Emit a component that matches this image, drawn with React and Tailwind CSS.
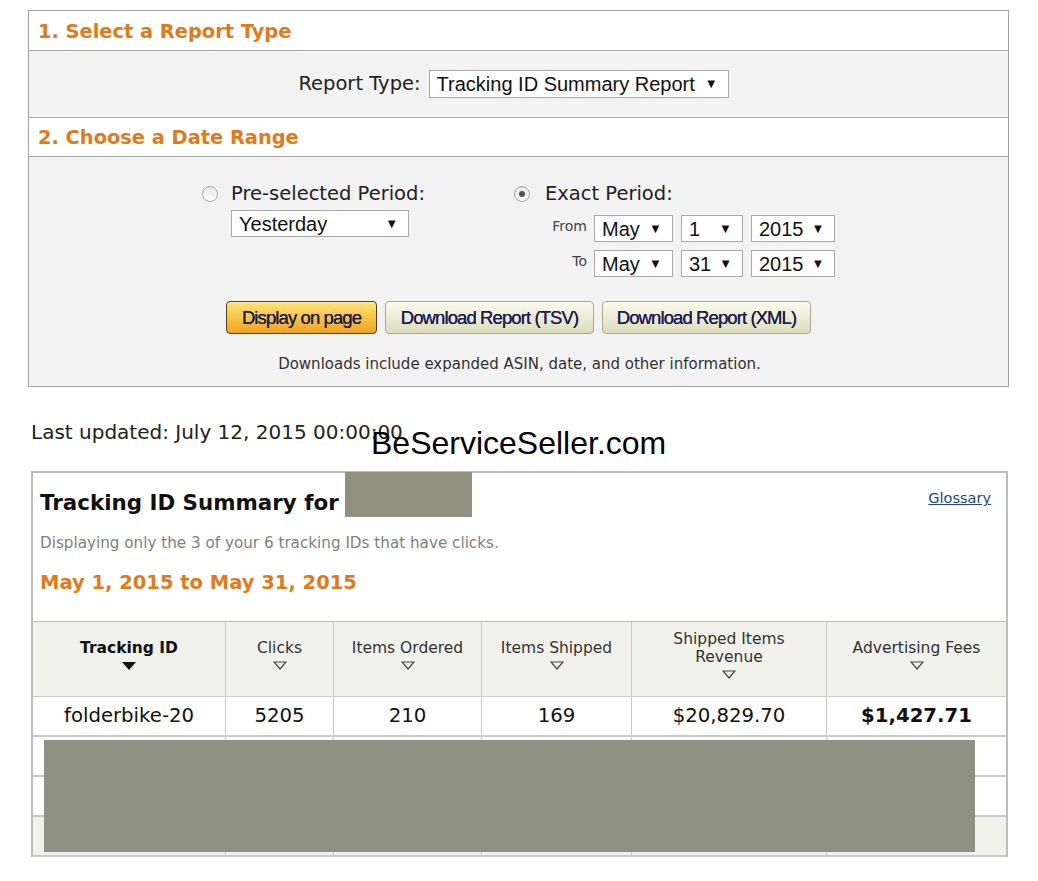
import React from "react";

const verdana = "font-['DejaVu_Sans',Verdana,sans-serif]";
const arial = "font-['Liberation_Sans',Arial,sans-serif]";

function FakeSelect({ value, className }) {
  return (
    <div
      className={`flex items-center justify-between bg-white border border-[#a9a9a9] pl-[7px] pr-[10px] text-[20px] text-[#111] ${arial} ${className}`}
    >
      <span>{value}</span>
      <span className="text-[13px] ml-2">▼</span>
    </div>
  );
}

function Radio({ checked }) {
  return (
    <div className="w-[16px] h-[16px] rounded-full border border-[#a6a6a6] bg-gradient-to-b from-[#e6e6e6] to-[#fbfbfb] flex items-center justify-center">
      {checked && <div className="w-[6px] h-[6px] rounded-full bg-[#555]" />}
    </div>
  );
}

function SortArrow({ filled }) {
  if (filled) {
    return (
      <svg width="16" height="10" viewBox="0 0 16 10">
        <polygon points="1,1 15,1 8,9" fill="#111" />
      </svg>
    );
  }
  return (
    <svg width="14" height="9" viewBox="0 0 14 9">
      <polygon points="1,1 13,1 7,8" fill="none" stroke="#444" strokeWidth="1.2" />
    </svg>
  );
}

const cols = [
  { label: "Tracking ID", w: "w-[192px]", bold: true },
  { label: "Clicks", w: "w-[108px]" },
  { label: "Items Ordered", w: "w-[148px]" },
  { label: "Items Shipped", w: "w-[150px]" },
  { label: "Shipped Items Revenue", w: "w-[195px]", two: true },
  { label: "Advertising Fees", w: "flex-1" },
];

const row1 = ["folderbike-20", "5205", "210", "169", "$20,829.70", "$1,427.71"];

const btnText = "text-[#1b1b55] text-[18.5px] tracking-[-0.9px] [text-shadow:0_0_0.5px_#1b1b55]";

export default function App() {
  return (
    <div className={`relative w-[1038px] h-[881px] bg-white ${verdana}`}>
      <div className="pt-[10px] pl-[28px]">
        {/* report form */}
        <div className="w-[981px] border border-[#a4a4a4]">
          <div className="h-[40px] flex items-center pl-[9px] border-b border-[#a8a8a8] bg-white">
            <h2 className="text-[19.4px] font-bold text-[#e07b1c] pt-[3px]">1. Select a Report Type</h2>
          </div>
          <div className="h-[66px] bg-[#f2f2f2] flex items-center justify-center pr-[10px]">
            <span className="text-[19.5px] text-[#222] mr-[8px]">Report Type:</span>
            <FakeSelect value="Tracking ID Summary Report" className="w-[300px] h-[28px]" />
          </div>
          <div className="h-[40px] flex items-center pl-[9px] border-y border-[#a8a8a8] bg-white">
            <h2 className="text-[19.4px] font-bold text-[#e07b1c] pt-[2px]">2. Choose a Date Range</h2>
          </div>
          <div className="h-[229px] bg-[#f2f2f2] pt-[25px]">
            <div className="flex justify-center gap-[89px]">
              <div className="flex flex-col">
                <div className="flex items-center">
                  <Radio />
                  <span className="ml-[13px] text-[19.5px] leading-[24px] text-[#222]">Pre-selected Period:</span>
                </div>
                <FakeSelect value="Yesterday" className="ml-[29px] mt-[4px] w-[178px] h-[27px]" />
              </div>
              <div className="flex flex-col">
                <div className="flex items-center">
                  <Radio checked />
                  <span className="ml-[15px] text-[19.5px] leading-[24px] text-[#222]">Exact Period:</span>
                </div>
                <div className="flex mt-[9px] items-start">
                  <span className="w-[80px] text-right pr-[7px] pt-[1px] text-[14px] text-[#444]">From</span>
                  <div className="flex gap-[8px]">
                    <FakeSelect value="May" className="w-[79px] h-[27px]" />
                    <FakeSelect value="1" className="w-[62px] h-[27px]" />
                    <FakeSelect value="2015" className="w-[84px] h-[27px]" />
                  </div>
                </div>
                <div className="flex mt-[8px] items-start">
                  <span className="w-[80px] text-right pr-[7px] pt-[1px] text-[14px] text-[#444]">To</span>
                  <div className="flex gap-[8px]">
                    <FakeSelect value="May" className="w-[79px] h-[27px]" />
                    <FakeSelect value="31" className="w-[62px] h-[27px]" />
                    <FakeSelect value="2015" className="w-[84px] h-[27px]" />
                  </div>
                </div>
              </div>
            </div>
            <div className={`flex justify-center mt-[24px] gap-[8px] ${arial}`}>
              <button className={`h-[33px] w-[151px] rounded-[4px] border border-[#4a3d24] bg-gradient-to-b from-[#fde27a] via-[#f7c444] to-[#eea320] shadow-[inset_0_1px_0_#fff3b0] ${btnText}`}>
                Display on page
              </button>
              <button className={`h-[33px] w-[209px] rounded-[4px] border border-[#a9a98c] bg-gradient-to-b from-[#fbfbee] to-[#dcdcbc] ${btnText}`}>
                Download Report (TSV)
              </button>
              <button className={`h-[33px] w-[209px] rounded-[4px] border border-[#a9a98c] bg-gradient-to-b from-[#fbfbee] to-[#dcdcbc] ${btnText}`}>
                Download Report (XML)
              </button>
            </div>
            <p className="text-center text-[15px] text-[#333] mt-[19px] pl-[2px]">
              Downloads include expanded ASIN, date, and other information.
            </p>
          </div>
        </div>

        <p className="mt-[33px] ml-[3px] text-[20px] leading-[24px] text-[#222]">Last updated: July 12, 2015 00:00:00</p>

        {/* summary box */}
        <div className="mt-[27px] ml-[3px] w-[977px] border-2 border-[#bdbdbd] border-b-0 relative">
          <div className="flex justify-between items-start">
            <div className="flex items-start pl-[7px]">
              <span className="text-[21.4px] font-bold text-[#111] mt-[14px]">Tracking ID Summary for</span>
              <div className="ml-[6px] w-[127px] h-[45px] -mt-[1px] bg-[#8f9080]" />
            </div>
            <a href="#" className="text-[14.5px] text-[#23438e] underline mt-[15px] mr-[15px]">Glossary</a>
          </div>
          <p className="pl-[7px] mt-[13px] text-[15.2px] text-[#808080]">
            Displaying only the 3 of your 6 tracking IDs that have clicks.
          </p>
          <p className="pl-[7px] mt-[13px] text-[19.5px] font-bold text-[#e07b1c]">May 1, 2015 to May 31, 2015</p>

          <div className="mt-[24px] border-t border-[#bdbdbd]">
            <div className="flex h-[75px] bg-[#f1f1ec] border-b border-[#c8c8c8]">
              {cols.map((c, i) => (
                <div
                  key={c.label}
                  className={`${c.w} ${i > 0 ? "border-l border-[#c8c8c8]" : ""} flex flex-col items-center ${c.two ? "pt-[8px]" : "pt-[17px]"}`}
                >
                  {c.two ? (
                    <span className="text-[15.5px] text-[#333] text-center leading-[18px]">
                      Shipped Items
                      <br />
                      Revenue
                    </span>
                  ) : (
                    <span className={`text-[15.5px] leading-[18px] ${c.bold ? "font-bold text-[#111]" : "text-[#333]"}`}>
                      {c.label}
                    </span>
                  )}
                  <div className="mt-[4px]">
                    <SortArrow filled={c.bold} />
                  </div>
                </div>
              ))}
            </div>
            <div className="flex h-[40px] border-b-2 border-[#c8c8c8]">
              {cols.map((c, i) => (
                <div
                  key={c.label}
                  className={`${c.w} ${i > 0 ? "border-l border-[#c8c8c8]" : ""} flex items-center justify-center text-[19.7px] text-[#111] ${i === 5 ? "font-bold" : ""}`}
                >
                  {row1[i]}
                </div>
              ))}
            </div>
            {[0, 1, 2].map((r) => (
              <div
                key={r}
                className={`flex h-[40px] border-b-2 border-[#c8c8c8] ${r === 2 ? "bg-[#f1f1ec]" : "bg-white"}`}
              >
                {cols.map((c, i) => (
                  <div key={c.label} className={`${c.w} ${i > 0 ? "border-l border-[#c8c8c8]" : ""}`} />
                ))}
              </div>
            ))}
          </div>
          {/* redaction */}
          <div className="absolute left-[11px] bottom-[5px] w-[931px] h-[112px] bg-[#8f9182]" />
        </div>
      </div>

      {/* watermark */}
      <div className={`absolute left-[371px] top-[419px] text-[32px] text-black ${arial}`}>BeServiceSeller.com</div>
    </div>
  );
}
